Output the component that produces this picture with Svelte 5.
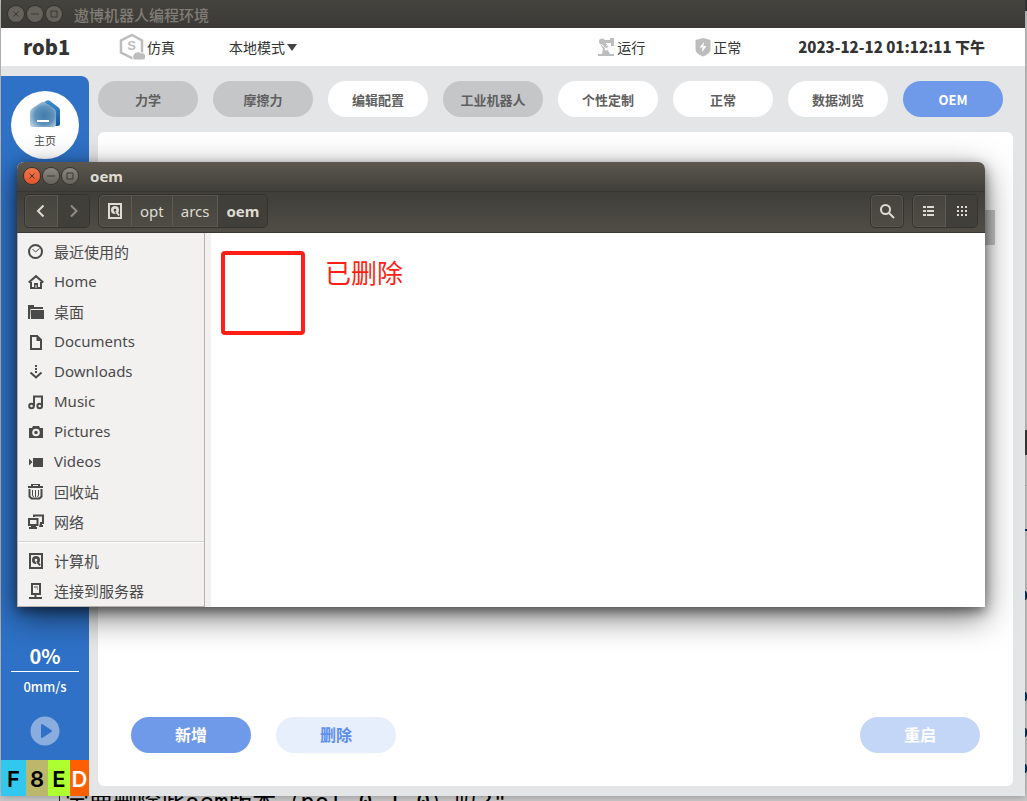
<script>
  let robot = 'rob1';
  let mode = '本地模式';
  let clock = '2023-12-12 01:12:11 下午';

  let tabs = [
    { id: 'dynamics', label: '力学', state: 'off' },
    { id: 'friction', label: '摩擦力', state: 'off' },
    { id: 'edit', label: '编辑配置', state: '' },
    { id: 'industrial', label: '工业机器人', state: 'off' },
    { id: 'custom', label: '个性定制', state: '' },
    { id: 'normal', label: '正常', state: '' },
    { id: 'data', label: '数据浏览', state: '' },
    { id: 'oem', label: 'OEM', state: 'active' },
  ];

  let safety = [
    { char: 'F', kind: 'cyan' },
    { char: '8', kind: 'khaki' },
    { char: 'E', kind: 'lime' },
    { char: 'D', kind: 'orange' },
  ];

  let path = ['opt', 'arcs', 'oem'];

  let places = [
    { icon: 'recent', label: '最近使用的' },
    { icon: 'home', label: 'Home' },
    { icon: 'desktop', label: '桌面' },
    { icon: 'documents', label: 'Documents' },
    { icon: 'downloads', label: 'Downloads' },
    { icon: 'music', label: 'Music' },
    { icon: 'pictures', label: 'Pictures' },
    { icon: 'videos', label: 'Videos' },
    { icon: 'trash', label: '回收站' },
    { icon: 'network', label: '网络' },
  ];

  let devices = [
    { icon: 'disk', label: '计算机' },
    { icon: 'server', label: '连接到服务器' },
  ];
</script>

{#snippet winButtons()}
  <div class="win-buttons">
    <button class="win-btn close" aria-label="关闭">
      <svg viewBox="0 0 16 16"><path d="M5.5 5.5l5 5M10.5 5.5l-5 5" /></svg>
    </button>
    <button class="win-btn" aria-label="最小化">
      <svg viewBox="0 0 16 16"><path d="M4 8h8" /></svg>
    </button>
    <button class="win-btn" aria-label="最大化">
      <svg viewBox="0 0 16 16"><path d="M5 5h6v6H5z" /></svg>
    </button>
  </div>
{/snippet}

{#snippet icon(name)}
  <svg class="icon" viewBox="0 0 16 16">
    {#if name === 'recent'}
      <circle cx="7.5" cy="7.5" r="6.5" class="line" />
      <path d="M4.5 5l3 3 4-3.5" class="thin" />
    {:else if name === 'home'}
      <path d="M.7 8.6L8 2.2l7.3 6.4M3 8v6h10V8" class="line" />
      <path d="M6 9h4v5H6z" /><path d="M7.5 11h1v3h-1z" class="hole" />
    {:else if name === 'desktop'}
      <path d="M0 1h6v2h9v2H2.5L2 15H0z" /><path d="M3 6h13v9H3z" />
    {:else if name === 'documents'}
      <path d="M3 2h6l4 4v9H3z" class="line" /><path d="M8.5 1v6H14V6L9 1z" />
    {:else if name === 'downloads'}
      <path d="M7 1h2v2H7zM7 4h2v2H7zM7 7h2v2H7z" />
      <path d="M2.5 8.5L8 13.5l5.5-5" class="line" />
    {:else if name === 'music'}
      <path d="M6 12V2.5h8V12" class="line" />
      <circle cx="3.5" cy="12" r="2.3" class="line" /><circle cx="11.7" cy="12" r="2.3" class="line" />
    {:else if name === 'pictures'}
      <path d="M1 4h3l1-2h6l1 2h3v10H1z" />
      <circle cx="8" cy="8.5" r="2.8" class="light" />
    {:else if name === 'videos'}
      <path d="M1 4.5L4.5 8 1 11.5zM5 4h10v9H5z" />
    {:else if name === 'trash'}
      <path d="M3 0h9v2h3v2H0V2h3z" /><path d="M5 1.5h5" class="white" />
      <path d="M1.5 5v7.5l2 2h8l2-2V5" class="line" />
      <path d="M4.5 6v5l1 2M7.5 6v7M10.5 6v5l-1 2" class="thin" />
    {:else if name === 'network'}
      <path d="M6 3V1.500h9V9h-3" class="line" />
      <path d="M1 5h8.5v6H1z" class="line" />
      <path d="M3 12h5v1h1v2H1v-2h2zM12 9h2v2h1v2h-4z" />
    {:else if name === 'disk'}
      <path d="M2 1h12v14H2z" class="line" />
      <circle cx="8" cy="7" r="4" /><circle cx="8" cy="7" r="1.3" class="hole" />
      <path d="M7.5 8l3 5" class="white" /><path d="M9.5 9l2.5 3.5" class="line" />
    {:else if name === 'server'}
      <path d="M4 1h8v10H4z" class="line" />
      <path d="M6 4h4M9 6h1" class="thin" /><path d="M1 15h13M7.5 11v4" class="line" />
    {/if}
  </svg>
{/snippet}

<div class="screen">
  <div class="app">
    <div class="app-title">
      {@render winButtons()}
      <span>遨博机器人编程环境</span>
    </div>

    <header>
      <h1>{robot}</h1>
      <div class="sim">
        <svg width="26" height="28" viewBox="0 0 26 28">
          <path d="M13 2l10 5.5v12L13 25 2 19.5v-12z" fill="none" stroke="#bdbdbd" stroke-width="2.5" />
          <text x="12.5" y="17" text-anchor="middle">S</text>
          <path d="M15 27a4 4 0 0 1 0-6 4.5 4.5 0 0 1 7-1 3.6 3.6 0 0 1 2 7z" fill="#bdbdbd" stroke="#fff" />
        </svg>
        仿真
      </div>
      <button class="mode">{mode}<i></i></button>
      <div class="run">
        <svg width="18" height="19" viewBox="0 0 18 19" fill="#bdbdbd">
          <circle cx="5" cy="3.5" r="3" /><path d="M5 2h8V0h4v8h-3V5H6z" />
          <path d="M3 5l4-2 4 5-1 3 3 5h4v2H1v-2h4l1-5z" />
          <circle cx="9" cy="11" r="1.5" fill="#fff" /><path d="M4.5 6l3 3.5M11 6l-1.5 2" stroke="#fff" />
        </svg>
        运行
      </div>
      <div class="ok">
        <svg width="16" height="19" viewBox="0 0 16 19">
          <path d="M8 0l7.5 2v9c0 4-4 6-7.5 7.5C4.5 17 .5 15 .5 11V2z" fill="#bdbdbd" />
          <path d="M9 4L4.5 9.5h3L7 14l4.5-6h-3z" fill="#fff" />
        </svg>
        正常
      </div>
      <time>{clock}</time>
    </header>

    <div class="work">
      <aside>
        <button class="home">
          <svg width="32" height="30" viewBox="0 0 32 30">
            <defs>
              <linearGradient id="roof" x1="0" y1="0" x2="0" y2="1">
                <stop offset="0" stop-color="#3d8dcd" /><stop offset="1" stop-color="#145a97" />
              </linearGradient>
              <radialGradient id="wall" cx=".55" cy=".55" r=".6">
                <stop offset="0" stop-color="#3f7cab" /><stop offset=".6" stop-color="#5e92bb" /><stop offset="1" stop-color="#b4cbdd" />
              </radialGradient>
            </defs>
            <path d="M17 2q2-1.500 4 0l8 6q2 1.500 2 3v14q0 2-2 2H12V5z" fill="url(#roof)" />
            <path d="M1 13q0-2 2-3.500l9-6q2-1.500 4 0l9 6q2 1.500 2 3.500v12q0 3-3 3H4q-3 0-3-3z" fill="url(#wall)" />
            <path d="M8 22h12" stroke="#fff" stroke-width="2" />
          </svg>
          主页
        </button>
        <div class="speed">
          <strong>0%</strong>
          <span>0mm/s</span>
        </div>
        <button class="play" aria-label="运行">
          <svg width="30" height="30" viewBox="0 0 30 30">
            <circle cx="15" cy="15" r="14.5" fill="#8badde" />
            <path d="M12 9l9 6-9 6z" fill="#2e71c6" stroke="#2e71c6" stroke-width="2" stroke-linejoin="round" />
          </svg>
        </button>
        <div class="safety">
          {#each safety as s}
            <b class={s.kind}>{s.char}</b>
          {/each}
        </div>
      </aside>

      <main>
        <nav class="tabs">
          {#each tabs as tab (tab.id)}
            <button class="tab {tab.state}">{tab.label}</button>
          {/each}
        </nav>
        <section class="panel">
          <div class="scroll"></div>
          <button class="action">新增</button>
          <button class="action pale">删除</button>
          <button class="action restart">重启</button>
        </section>
      </main>
    </div>
  </div>
  <p class="behind">定要删除此oem版本（pol_0_1_0）吗?"</p>
  <!-- page lying under the windows, right edge -->
  <svg class="edge" width="2" height="801" viewBox="0 0 2 801">
    <path d="M0 0h2v11H0zM0 430h2v25H0z" fill="#333" />
    <path d="M0 485h2v1H0z" fill="#999" />
    <path d="M0 529h2v2H0zM0 591h1l1 2v5l-1 2H0zM0 692h1l1 2v5l-1 2H0zM0 728h1l1 2v5l-1 2H0zM0 764h1l1 2v5l-1 2H0z" fill="#0b2a4a" />
  </svg>

  <!-- file manager -->
  <div class="files">
    <div class="files-title">
      {@render winButtons()}
      <strong>oem</strong>
    </div>
    <div class="toolbar">
      <div class="group">
        <button aria-label="后退"><svg class="tool" viewBox="0 0 16 16"><path d="M10.5 2.5L5 8l5.5 5.5" /></svg></button>
        <button class="dim" aria-label="前进"><svg class="tool" viewBox="0 0 16 16"><path d="M5 2.5L10.5 8 5 13.5" /></svg></button>
      </div>
      <div class="group crumbs">
        <button aria-label="计算机">{@render icon('disk')}</button>
        {#each path as part, i}
          <button class:current={i === path.length - 1}>{part}</button>
        {/each}
      </div>
      <div class="group search">
        <button aria-label="搜索"><svg class="tool" viewBox="0 0 16 16"><circle cx="6.5" cy="6.5" r="4.5" /><path d="M10 10l5 5" /></svg></button>
      </div>
      <div class="group">
        <button aria-label="列表视图">
          <svg class="tool fill" viewBox="0 0 16 16"><path d="M2 3h3v2H2zM6 3h7v2H6zM2 7h3v2H2zM6 7h7v2H6zM2 11h3v2H2zM6 11h7v2H6z" /></svg>
        </button>
        <button class="current" aria-label="图标视图">
          <svg class="tool fill" viewBox="0 0 16 16"><path d="M3 3h2v2H3zM7 3h2v2H7zM11 3h2v2h-2zM3 7h2v2H3zM7 7h2v2H7zM11 7h2v2h-2zM3 11h2v2H3zM7 11h2v2H7zM11 11h2v2h-2z" /></svg>
        </button>
      </div>
    </div>
    <div class="files-body">
      <div class="places">
        <ul>
          {#each places as place}
            <li>{@render icon(place.icon)}<span>{place.label}</span></li>
          {/each}
        </ul>
        <hr />
        <ul>
          {#each devices as place}
            <li>{@render icon(place.icon)}<span>{place.label}</span></li>
          {/each}
        </ul>
      </div>
      <div class="content">
        <div class="mark"></div>
        <p>已删除</p>
      </div>
    </div>
  </div>
</div>

<style>
  :global(body) {
    background: #c9c9c9;
    overflow: hidden;
  }

  button {
    border: 0;
    padding: 0;
    background: none;
    font: inherit;
    color: inherit;
    cursor: pointer;
  }

  .screen {
    position: relative;
    display: flex;
    flex-direction: column;
    height: 100vh;
    overflow: hidden;
    font-family: "Noto Sans CJK SC", sans-serif;
    color: #333;
  }

  .app {
    flex: 1;
    display: flex;
    flex-direction: column;
    margin: 0 2px 0 1px;
    background: #e3e5e7;
    box-shadow: 0 0 8px rgba(0, 0, 0, 0.3);
  }

  .app-title {
    display: flex;
    align-items: center;
    gap: 12px;
    height: 28px;
    padding: 0 7px;
    background: linear-gradient(#45433e, #3b3a36);
    color: #807d76;
    font-size: 15px;
    font-weight: 500;
  }

  .win-buttons {
    display: flex;
    gap: 3px;
  }

  .win-btn {
    display: flex;
    width: 16px;
    height: 16px;
    border-radius: 50%;
    background: #64625b;
    box-shadow: 0 0 0 1px #35342f;
  }

  .win-btn svg {
    width: 16px;
    height: 16px;
    fill: none;
    stroke: #3a3934;
  }

  header {
    display: flex;
    align-items: center;
    height: 38px;
    background: #fff;
    font-size: 14px;
    line-height: 20px;
  }

  header div {
    display: flex;
    align-items: center;
    gap: 2px;
  }

  h1 {
    width: 96px;
    margin: 0 0 0 22px;
    font-size: 20px;
    font-weight: 900;
  }

  .sim text {
    font: bold 13px "Liberation Sans", sans-serif;
    fill: #bdbdbd;
  }

  .mode {
    display: flex;
    align-items: center;
    gap: 2px;
    margin-left: 54px;
  }

  .mode i {
    border: 5px solid transparent;
    border-top: 7px solid #444;
    border-bottom: 0;
  }

  .run {
    margin-left: auto;
  }

  .ok {
    margin-left: 50px;
  }

  time {
    margin: 0 40px 0 57px;
    font-size: 15px;
    font-weight: 900;
  }

  .work {
    flex: 1;
    display: flex;
    gap: 9px;
    padding-right: 12px;
  }

  aside {
    display: flex;
    flex-direction: column;
    align-items: center;
    width: 88px;
    margin-top: 10px;
    border-radius: 0 8px 0 0;
    background: #2e71c6;
    color: #fff;
    overflow: hidden;
  }

  .home {
    display: flex;
    flex-direction: column;
    align-items: center;
    width: 68px;
    height: 68px;
    margin-top: 15px;
    padding-top: 8px;
    box-sizing: border-box;
    border-radius: 50%;
    background: #fff;
    color: #444;
    font-size: 11px;
    line-height: 22px;
  }

  .speed {
    display: flex;
    flex-direction: column;
    align-items: center;
    width: 68px;
    margin-top: auto;
  }

  .speed strong {
    width: 100%;
    border-bottom: 1px solid #fff;
    font-size: 20px;
    line-height: 30px;
    text-align: center;
  }

  .speed span {
    font-size: 13px;
    font-weight: 500;
    line-height: 30px;
  }

  .play {
    height: 30px;
    margin: 14px 0;
  }

  .safety {
    display: flex;
    align-self: stretch;
    height: 36px;
    font: 600 22px/38px Inter, sans-serif;
    color: #000;
    text-align: center;
  }

  .safety b {
    flex: 22;
    font-weight: 600;
  }

  .safety .cyan {
    flex: 25;
    background: #30c8ee;
  }

  .safety .khaki {
    background: #bdb76b;
  }

  .safety .lime {
    background: #adff2f;
  }

  .safety .orange {
    flex: 19;
    background: #ff5f00;
    color: #fff;
  }

  main {
    flex: 1;
    display: flex;
    flex-direction: column;
    padding: 15px 0 10px;
  }

  .tabs {
    display: flex;
    gap: 15px;
    padding-right: 10px;
    margin-bottom: 15px;
  }

  .tab {
    flex: 1;
    height: 36px;
    border-radius: 18px;
    background: #fff;
    color: #5f5f5f;
    font-size: 13px;
    font-weight: bold;
  }

  .tab.off {
    background: #c5c6c8;
  }

  .tab.active {
    background: #6f9aea;
    color: #fff;
  }

  .panel {
    position: relative;
    flex: 1;
    display: flex;
    align-items: flex-end;
    gap: 25px;
    padding: 33px;
    border-radius: 6px;
    background: #fff;
  }

  .scroll {
    position: absolute;
    top: 78px;
    right: 18px;
    width: 12px;
    height: 35px;
    background: #c8c8c8;
  }

  .action {
    width: 120px;
    height: 36px;
    padding-bottom: 2px;
    border-radius: 18px;
    background: #6f9aea;
    color: #fff;
    font-size: 16px;
    font-weight: bold;
  }

  .action.pale {
    background: #e8effc;
    color: #5b8ff0;
  }

  .action.restart {
    margin-left: auto;
    background: #c4d6f8;
  }

  .behind {
    height: 5px;
    margin: 0 0 0 59px;
    padding-left: 5px;
    border-left: 1px solid #222;
    overflow: hidden;
    font: 24px/14px "DejaVu Sans Mono", "Noto Sans CJK SC", monospace;
    color: #000;
    white-space: nowrap;
  }

  .edge {
    position: absolute;
    top: 0;
    right: 0;
  }

  .files {
    position: absolute;
    top: 162px;
    left: 17px;
    right: 42px;
    border-radius: 7px 7px 0 0;
    background: #fff;
    box-shadow: 0 10px 32px rgba(0, 0, 0, 0.55), 0 4px 12px rgba(0, 0, 0, 0.45);
    font-family: "Noto Sans", "Noto Sans CJK SC", sans-serif;
  }

  .files-title {
    display: flex;
    align-items: center;
    gap: 12px;
    height: 29px;
    padding: 0 7px 1px;
    box-sizing: border-box;
    border-radius: 7px 7px 0 0;
    background: linear-gradient(#5c584f, #403f3a);
    color: #dfdbd2;
    font-size: 15px;
  }

  .files .win-btn {
    background: linear-gradient(#8a877e, #65635b);
  }

  .files .close {
    background: linear-gradient(#f4744a, #e2562a);
  }

  .toolbar {
    display: flex;
    align-items: center;
    gap: 8px;
    height: 42px;
    padding: 0 7px 2px;
    box-sizing: border-box;
    border-top: 1px solid #383733;
    border-bottom: 1px solid #3a3732;
    background: linear-gradient(#3f3e39, #504d46);
    color: #dfdbd2;
    font-size: 15px;
  }

  .group {
    display: flex;
    height: 34px;
    box-sizing: border-box;
    border: 1px solid #33322e;
    border-radius: 5px;
    background: linear-gradient(#45443e, #4e4c45);
    box-shadow: inset 0 0 0 1px #57554d;
    overflow: hidden;
  }

  .group button {
    display: flex;
    align-items: center;
    justify-content: center;
    min-width: 32px;
  }

  .group button + button {
    border-left: 1px solid #5c5a52;
  }

  .group .current,
  .group .dim {
    background: #403f3a;
  }

  .group .dim {
    color: #8f8c84;
  }

  .crumbs button + button {
    padding: 0 8px;
  }

  .crumbs .current {
    font-weight: bold;
  }

  .search {
    margin-left: auto;
  }

  .tool {
    width: 16px;
    height: 16px;
    fill: none;
    stroke: currentColor;
    stroke-width: 2;
  }

  .tool.fill {
    fill: currentColor;
    stroke: none;
  }

  .icon {
    flex: none;
    width: 16px;
    height: 16px;
    fill: currentColor;
    overflow: visible;
  }

  .icon .line,
  .icon .thin {
    fill: none;
    stroke: currentColor;
    stroke-width: 2;
  }

  .icon .thin {
    stroke-width: 1;
  }

  .icon .hole {
    fill: #f2f1f0;
  }

  .icon .light {
    fill: currentColor;
    stroke: #f2f1f0;
    stroke-width: 2;
  }

  .icon .white {
    stroke: #f2f1f0;
    stroke-width: 1;
  }

  .crumbs .hole {
    fill: #4a4842;
  }

  .crumbs .white {
    stroke: #4a4842;
  }

  .files-body {
    display: flex;
  }

  .places {
    width: 188px;
    padding-top: 4px;
    box-sizing: border-box;
    border: solid #b6b2ab;
    border-width: 0 1px 1px;
    background: #f2f1f0;
    color: #4a4a4a;
  }

  ul {
    margin: 0;
    padding: 0;
    list-style: none;
  }

  li {
    display: flex;
    align-items: center;
    gap: 10px;
    height: 30px;
    padding-left: 10px;
    font-size: 15px;
  }

  li span {
    padding-bottom: 2px;
  }

  hr {
    margin: 4px 0 3px;
    border: 0;
    border-top: 1px solid #d5d3d0;
    border-bottom: 1px solid #fff;
  }

  .content {
    flex: 1;
    display: flex;
    align-items: flex-start;
    gap: 20px;
    padding: 18px 10px;
    border-left: 6px solid #f2f1f0;
  }

  .mark {
    width: 76px;
    height: 76px;
    border: 4px solid #ff1f14;
    border-radius: 4px;
  }

  .content p {
    margin: 0;
    color: #ff1f14;
    font-size: 26px;
    line-height: 44px;
  }
</style>
